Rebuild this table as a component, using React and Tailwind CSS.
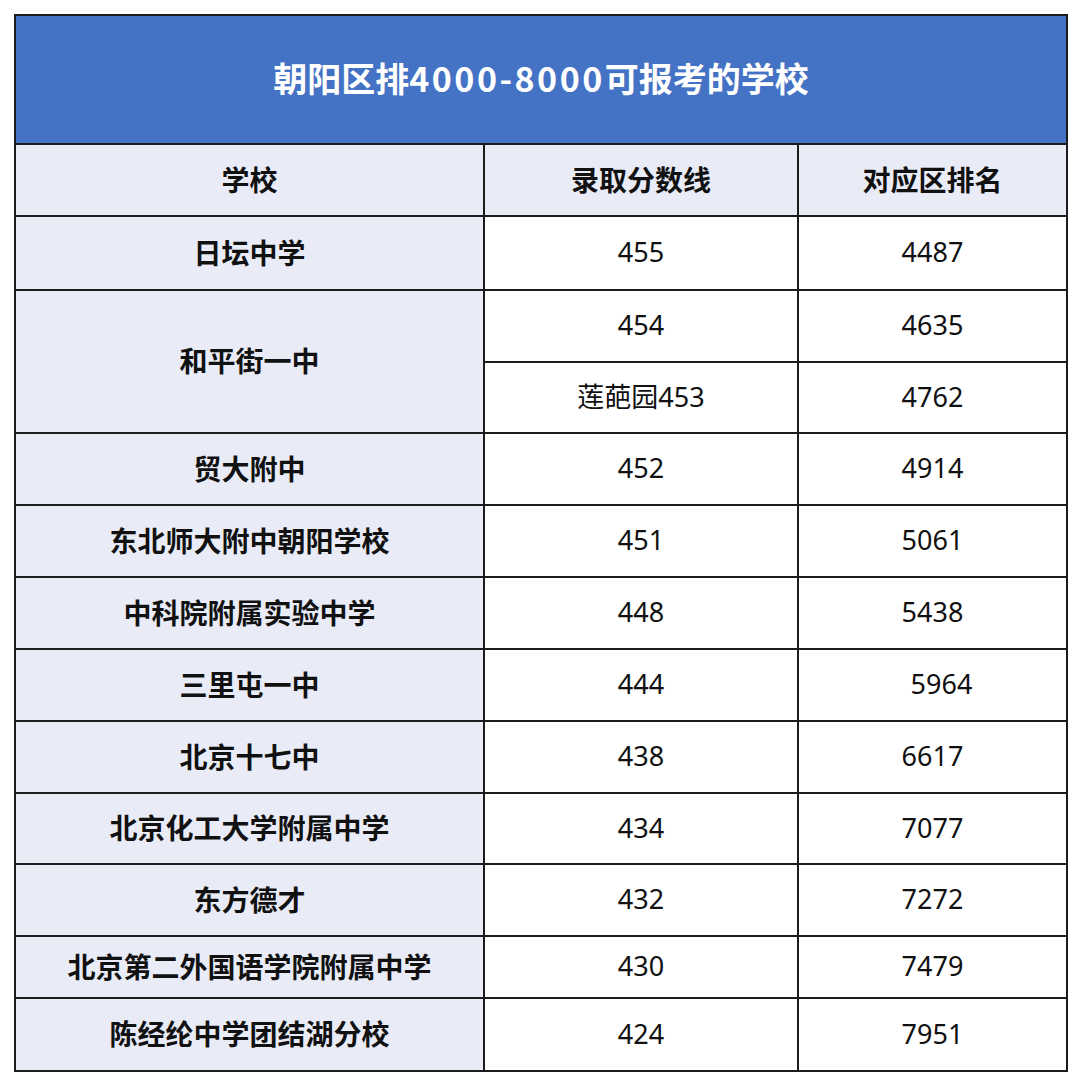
import React from 'react';

const rows = [
  { name: '日坛中学', score: '455', rank: '4487', h: 'h-[74px]' },
  { name: '贸大附中', score: '452', rank: '4914', h: 'h-[72px]' },
  { name: '东北师大附中朝阳学校', score: '451', rank: '5061', h: 'h-[72px]' },
  { name: '中科院附属实验中学', score: '448', rank: '5438', h: 'h-[72px]' },
  { name: '三里屯一中', score: '444', rank: '5964', h: 'h-[72px]', shift: true },
  { name: '北京十七中', score: '438', rank: '6617', h: 'h-[72px]' },
  { name: '北京化工大学附属中学', score: '434', rank: '7077', h: 'h-[71px]' },
  { name: '东方德才', score: '432', rank: '7272', h: 'h-[72px]' },
  { name: '北京第二外国语学院附属中学', score: '430', rank: '7479', h: 'h-[62px]' },
  { name: '陈经纶中学团结湖分校', score: '424', rank: '7951', h: 'h-[73px]' },
];

const cjk = { fontFamily: '"Noto Sans CJK SC", sans-serif' };
const num = { fontFamily: '"Noto Sans", "Noto Sans CJK SC", sans-serif' };

const nameCell = 'border-2 border-[#1c1c1c] bg-[#e9ecf7] text-center font-bold text-[28px] text-[#111] p-0 pb-[3px] leading-none';
const valCell = 'border-2 border-[#1c1c1c] bg-white text-center text-[27px] text-[#111] p-0 pb-[3px] leading-none';

const App = () => {
  const [first, ...rest] = rows;
  return (
    <div className="w-[1080px] h-[1086px] bg-white pt-[14px] pl-[14px]">
      <table className="w-[1052px] border-collapse table-fixed" style={cjk}>
        <colgroup>
          <col className="w-[469px]" />
          <col className="w-[314px]" />
          <col className="w-[269px]" />
        </colgroup>
        <tbody>
          {/* Title */}
          <tr className="h-[129px]">
            <td colSpan={3} className="border-2 border-[#1c1c1c] bg-[#4472c4] text-center text-white font-bold text-[34px] leading-none pb-[3px]">
              朝阳区排<span className="tracking-[2.5px]">4000-8000</span>可报考的学校
            </td>
          </tr>

          {/* Header */}
          <tr className="h-[72px]">
            <td className={nameCell}>学校</td>
            <td className={nameCell}>录取分数线</td>
            <td className={nameCell}>对应区排名</td>
          </tr>

          <tr className={first.h}>
            <td className={nameCell}>{first.name}</td>
            <td className={valCell} style={num}>{first.score}</td>
            <td className={valCell} style={num}>{first.rank}</td>
          </tr>

          {/* 和平街一中 spans two lines */}
          <tr className="h-[72px]">
            <td rowSpan={2} className={nameCell}>和平街一中</td>
            <td className={valCell} style={num}>454</td>
            <td className={valCell} style={num}>4635</td>
          </tr>
          <tr className="h-[71px]">
            <td className={valCell} style={num}>莲葩园453</td>
            <td className={valCell} style={num}>4762</td>
          </tr>

          {rest.map((r) => (
            <tr key={r.name} className={r.h}>
              <td className={nameCell}>{r.name}</td>
              <td className={valCell} style={num}>{r.score}</td>
              <td className={`${valCell} ${r.shift ? 'pl-[18px]' : ''}`} style={num}>{r.rank}</td>
            </tr>
          ))}
        </tbody>
      </table>
    </div>
  );
};

export default App;
